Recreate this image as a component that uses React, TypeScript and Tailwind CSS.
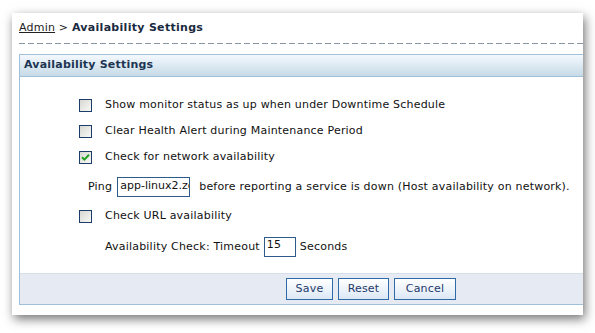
import React from "react";

const font = { fontFamily: '"DejaVu Sans", Verdana, sans-serif' };

function Check({ checked = false }: { checked?: boolean }) {
  return (
    <div className="w-[13px] h-[13px] border border-[#1c3c6c] bg-[linear-gradient(135deg,#d8d8d2,#f8f8f6)] flex items-center justify-center">
      {checked && (
        <svg width="9" height="9" viewBox="0 0 9 9">
          <path d="M1 4.2 L3.4 6.6 L8 1.8" stroke="#21a121" strokeWidth="2" fill="none" />
        </svg>
      )}
    </div>
  );
}

function Btn({ label, w }: { label: string; w: string }) {
  return (
    <button
      className={`${w} h-[22px] border border-[#2f6aa8] bg-[linear-gradient(#ffffff,#dce8f6)] text-[11px] tracking-[0.2px] text-[#1f3a6a] flex items-center justify-center`}
      style={font}
    >
      {label}
    </button>
  );
}

export default function App() {
  return (
    <div className="w-[595px] h-[333px] bg-white pl-[12px] pt-[13px]" style={font}>
      <div className="w-[571px] h-[302px] bg-white overflow-hidden shadow-[2px_4px_10px_rgba(0,0,0,0.55)] pl-[7px] text-[11px] tracking-[0.2px] text-[#111]">
        <div className="pt-[8px] h-[22px] leading-[14px]">
          <span className="underline text-[#222]">Admin</span>
          <span className="text-[#222]"> &gt; </span>
          <span className="font-bold text-[#1a2a40] tracking-[0.3px]">Availability Settings</span>
        </div>
        <div className="mt-[8px] h-px w-[570px] bg-[repeating-linear-gradient(to_right,#8797a8_0,#8797a8_6px,transparent_6px,transparent_9px)]" />
        <div className="mt-[10px] w-[575px] border border-[#9fc0d8]">
          <div className="h-[22px] border-b border-[#9fc0d8] bg-[linear-gradient(#f4f9fe,#c6dae6)] flex items-center pl-[4px] font-bold text-[#1c3552]">
            Availability Settings
          </div>
          <div className="pt-[15px] pb-[8px]">
            <div className="h-[26px] flex items-center pl-[59px] gap-[13px]">
              <Check />
              <span>Show monitor status as up when under Downtime Schedule</span>
            </div>
            <div className="h-[26px] flex items-center pl-[59px] gap-[13px]">
              <Check />
              <span>Clear Health Alert during Maintenance Period</span>
            </div>
            <div className="h-[26px] flex items-center pl-[59px] gap-[13px]">
              <Check checked />
              <span>Check for network availability</span>
            </div>
            <div className="h-[34px] flex items-center pl-[68px]">
              <span>Ping</span>
              <div className="ml-[5px] w-[73px] h-[20px] border border-[#2c5a8a] overflow-hidden whitespace-nowrap pl-[2px] leading-[16px] tracking-normal">
                app-linux2.zo
              </div>
              <span className="ml-[9px]">before reporting a service is down (Host availability on network).</span>
            </div>
            <div className="h-[25px] flex items-center pl-[59px] gap-[13px]">
              <Check />
              <span>Check URL availability</span>
            </div>
            <div className="h-[36px] flex items-center pl-[85px]">
              <span>Availability Check: Timeout</span>
              <div className="ml-[4px] w-[32px] h-[20px] border border-[#2c5a8a] pl-[2px] leading-[14px]">15</div>
              <span className="ml-[4px]">Seconds</span>
            </div>
          </div>
          <div className="h-[31px] bg-[#e6ebf3] border-t border-[#d6e0ea] flex items-center pl-[266px] gap-[5px]">
            <Btn label="Save" w="w-[47px]" />
            <Btn label="Reset" w="w-[51px]" />
            <Btn label="Cancel" w="w-[62px]" />
          </div>
        </div>
      </div>
    </div>
  );
}
